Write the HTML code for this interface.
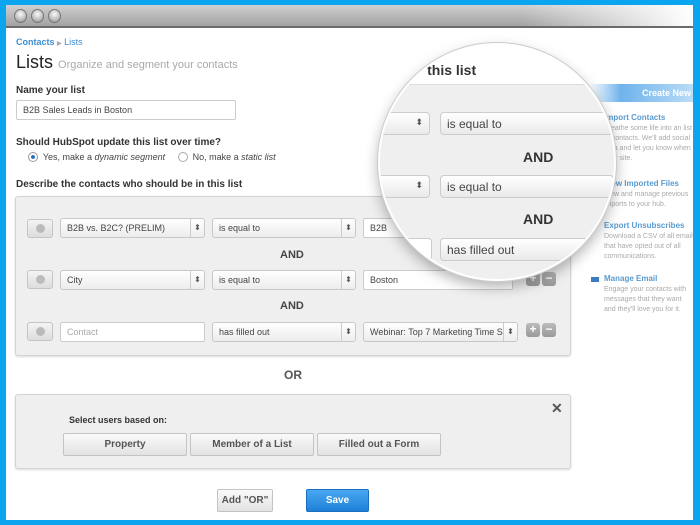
<!DOCTYPE html>
<html><head><meta charset="utf-8"><style>
*{margin:0;padding:0;box-sizing:border-box}
body{width:700px;height:525px;background:#0aa4ef;font-family:"Liberation Sans",sans-serif;position:relative;overflow:hidden;color:#333}
.a{position:absolute}
#win{left:6px;top:5px;width:687px;height:515px;background:#fff;overflow:hidden}
.tb{left:0;top:0;width:687px;height:23px;background:linear-gradient(90deg,rgba(255,255,255,0) 75%,#fff 100%),linear-gradient(#cfcfcf,#a2a2a2);border-bottom:2px solid #6a6a6a}
.dot{top:4px;width:13px;height:14px;border-radius:50%;background:radial-gradient(circle at 50% 35%,#fafafa,#bbb 60%,#888);border:1px solid #777}
.sel{height:20px;border:1px solid #c8c8c8;border-radius:3px;background:linear-gradient(#fff,#ececec);font-size:9px;color:#444;padding:4px 6px;white-space:nowrap;overflow:hidden}
.sel:after{content:"\2B0D";position:absolute;right:0;top:0;width:13px;height:18px;border-left:1px solid #ccc;background:linear-gradient(#fff,#eee);font-size:8px;color:#555;text-align:center;line-height:18px}
.inp{height:20px;border:1px solid #ccc;border-radius:2px;background:#fff;font-size:9px;color:#444;padding:4px 6px;white-space:nowrap;overflow:hidden}
.cb{width:26px;height:19px;border:1px solid #c4c4c4;border-radius:3px;background:linear-gradient(#f4f4f4,#ddd)}
.cb i{position:absolute;left:8px;top:4px;width:9px;height:9px;border-radius:50%;background:#bbb}
.pm{width:14px;height:14px;border-radius:3px;background:linear-gradient(#bbb,#999);color:#fff;font-weight:bold;font-size:12px;line-height:13px;text-align:center}
.and{font-size:11px;font-weight:bold;color:#444}
.btn{height:23px;border:1px solid #c4c4c4;border-radius:2px;background:linear-gradient(#fafafa,#e2e2e2);font-size:10px;font-weight:bold;color:#555;text-align:center;line-height:21px}
.lab{font-size:10px;font-weight:bold;color:#333}
.side{font-size:7px;color:#aaa;line-height:10px;white-space:nowrap;overflow:hidden}
.side b{color:#5a9bd0;font-size:8px;line-height:12px}
</style></head><body>
<div id="win" class="a">
<div class="a tb"></div>
<div class="a dot" style="left:8px"></div><div class="a dot" style="left:25px"></div><div class="a dot" style="left:42px"></div>
</div>
<div class="a" style="left:16px;top:37px;font-size:9px;font-weight:bold;color:#3b8fd3">Contacts <span style="color:#aaa;font-size:6px">▶</span> <span style="font-weight:normal">Lists</span></div>
<div class="a" style="left:16px;top:52px;font-size:18px;color:#222">Lists <span style="font-size:11px;color:#aaa">Organize and segment your contacts</span></div>
<div class="a lab" style="left:16px;top:85px">Name your list</div>
<div class="a inp" style="left:16px;top:100px;width:220px">B2B Sales Leads in Boston</div>
<div class="a lab" style="left:16px;top:137px">Should HubSpot update this list over time?</div>
<div class="a" style="left:28px;top:152px;font-size:9px;color:#444"><span style="display:inline-block;width:10px;height:10px;border-radius:50%;border:1px solid #999;vertical-align:-2px;background:radial-gradient(#2a6fc0 30%,#fff 40%)"></span>&nbsp; Yes, make a <i>dynamic segment</i> &nbsp;&nbsp;&nbsp;&nbsp;<span style="display:inline-block;width:10px;height:10px;border-radius:50%;border:1px solid #aaa;vertical-align:-2px"></span>&nbsp; No, make a <i>static list</i></div>
<div class="a lab" style="left:16px;top:179px">Describe the contacts who should be in this list</div>

<div class="a" style="left:15px;top:196px;width:556px;height:160px;background:#efefef;border:1px solid #d4d4d4;border-radius:3px;box-shadow:0 1px 2px rgba(0,0,0,.15)"></div>
<div class="a cb" style="left:27px;top:219px"><i></i></div>
<div class="a sel" style="left:60px;top:218px;width:145px">B2B vs. B2C? (PRELIM)</div>
<div class="a sel" style="left:212px;top:218px;width:144px">is equal to</div>
<div class="a inp" style="left:363px;top:218px;width:150px">B2B</div>
<div class="a and" style="left:280px;top:249px">AND</div>
<div class="a cb" style="left:27px;top:270px"><i></i></div>
<div class="a sel" style="left:60px;top:270px;width:145px">City</div>
<div class="a sel" style="left:212px;top:270px;width:144px">is equal to</div>
<div class="a inp" style="left:363px;top:270px;width:150px">Boston</div>
<div class="a pm" style="left:526px;top:272px">+</div><div class="a pm" style="left:542px;top:272px">−</div>
<div class="a and" style="left:280px;top:300px">AND</div>
<div class="a cb" style="left:27px;top:322px"><i></i></div>
<div class="a inp" style="left:60px;top:322px;width:145px;color:#aaa">Contact</div>
<div class="a sel" style="left:212px;top:322px;width:144px">has filled out</div>
<div class="a sel" style="left:363px;top:322px;width:155px;padding-right:16px">Webinar: Top 7 Marketing Time Si</div>
<div class="a pm" style="left:526px;top:323px">+</div><div class="a pm" style="left:542px;top:323px">−</div>
<div class="a" style="left:284px;top:368px;font-size:12px;font-weight:bold;color:#555">OR</div>

<div class="a" style="left:15px;top:394px;width:556px;height:75px;background:#efefef;border:1px solid #d4d4d4;border-radius:3px;box-shadow:0 1px 2px rgba(0,0,0,.15)"></div>
<div class="a" style="left:551px;top:400px;font-size:14px;font-weight:bold;color:#555">✕</div>
<div class="a" style="left:69px;top:415px;font-size:9px;font-weight:bold;color:#333">Select users based on:</div>
<div class="a btn" style="left:63px;top:433px;width:124px">Property</div>
<div class="a btn" style="left:190px;top:433px;width:124px">Member of a List</div>
<div class="a btn" style="left:317px;top:433px;width:124px">Filled out a Form</div>
<div class="a btn" style="left:217px;top:489px;width:56px">Add "OR"</div>
<div class="a btn" style="left:306px;top:489px;width:63px;background:linear-gradient(#4aa8f0,#1e7fd8);border-color:#1a6fc0;color:#fff">Save</div>

<div class="a" style="left:590px;top:84px;width:103px;height:18px;background:linear-gradient(90deg,#fff,#6fb3ec 30%,#b9dcf7);font-size:9px;font-weight:bold;color:#fff;padding:4px 0 0 52px;white-space:nowrap;overflow:hidden">Create New</div>
<div class="a side" style="left:604px;top:112px;width:89px"><b>Import Contacts</b><br>Breathe some life into an list<br>of contacts. We'll add social<br>data and let you know when<br>your site.</div>
<div class="a side" style="left:604px;top:178px;width:89px"><b>View Imported Files</b><br>View and manage previous<br>imports to your hub.</div>
<div class="a side" style="left:604px;top:220px;width:89px"><b>Export Unsubscribes</b><br>Download a CSV of all emails<br>that have opted out of all<br>communications.</div>
<div class="a" style="left:591px;top:277px;width:8px;height:5px;background:#3a7cc0"></div>
<div class="a side" style="left:604px;top:273px;width:89px"><b>Manage Email</b><br>Engage your contacts with<br>messages that they want<br>and they'll love you for it.</div>

<div class="a" style="left:378px;top:43px;width:238px;height:238px;border-radius:50%;overflow:hidden;background:#efefef;border:2px solid #fff;box-shadow:0 0 0 1px #ccc,0 6px 14px rgba(0,0,0,.3)">
 <div class="a" style="left:0;top:0;width:240px;height:40px;background:#fff;border-bottom:1px solid #ddd"></div>
 <div class="a" style="left:36px;top:17px;font-size:14px;font-weight:bold;color:#333">.' this list</div>
 <div class="a" style="left:-20px;top:67px;width:70px;height:23px;border:1px solid #ccc;border-radius:4px;background:linear-gradient(#fff,#eaeaea)"><span class="a" style="right:6px;top:4px;font-size:9px;color:#555">⬍</span></div>
 <div class="a" style="left:60px;top:67px;width:174px;height:23px;border:1px solid #ccc;border-radius:4px;background:linear-gradient(#fff,#eaeaea);font-size:12px;color:#444;padding:4px 6px">is equal to</div>
 <div class="a" style="left:143px;top:104px;font-size:14px;font-weight:bold;color:#333">AND</div>
 <div class="a" style="left:-20px;top:130px;width:70px;height:23px;border:1px solid #ccc;border-radius:4px;background:linear-gradient(#fff,#eaeaea)"><span class="a" style="right:6px;top:4px;font-size:9px;color:#555">⬍</span></div>
 <div class="a" style="left:60px;top:130px;width:174px;height:23px;border:1px solid #ccc;border-radius:4px;background:linear-gradient(#fff,#eaeaea);font-size:12px;color:#444;padding:4px 6px">is equal to</div>
 <div class="a" style="left:143px;top:166px;font-size:14px;font-weight:bold;color:#333">AND</div>
 <div class="a" style="left:-20px;top:193px;width:72px;height:23px;border:1px solid #ccc;border-radius:4px;background:#fff"></div>
 <div class="a" style="left:60px;top:193px;width:190px;height:23px;border:1px solid #ccc;border-radius:4px;background:linear-gradient(#fff,#eaeaea);font-size:12px;color:#444;padding:4px 6px">has filled out</div>
</div>
</body></html>
